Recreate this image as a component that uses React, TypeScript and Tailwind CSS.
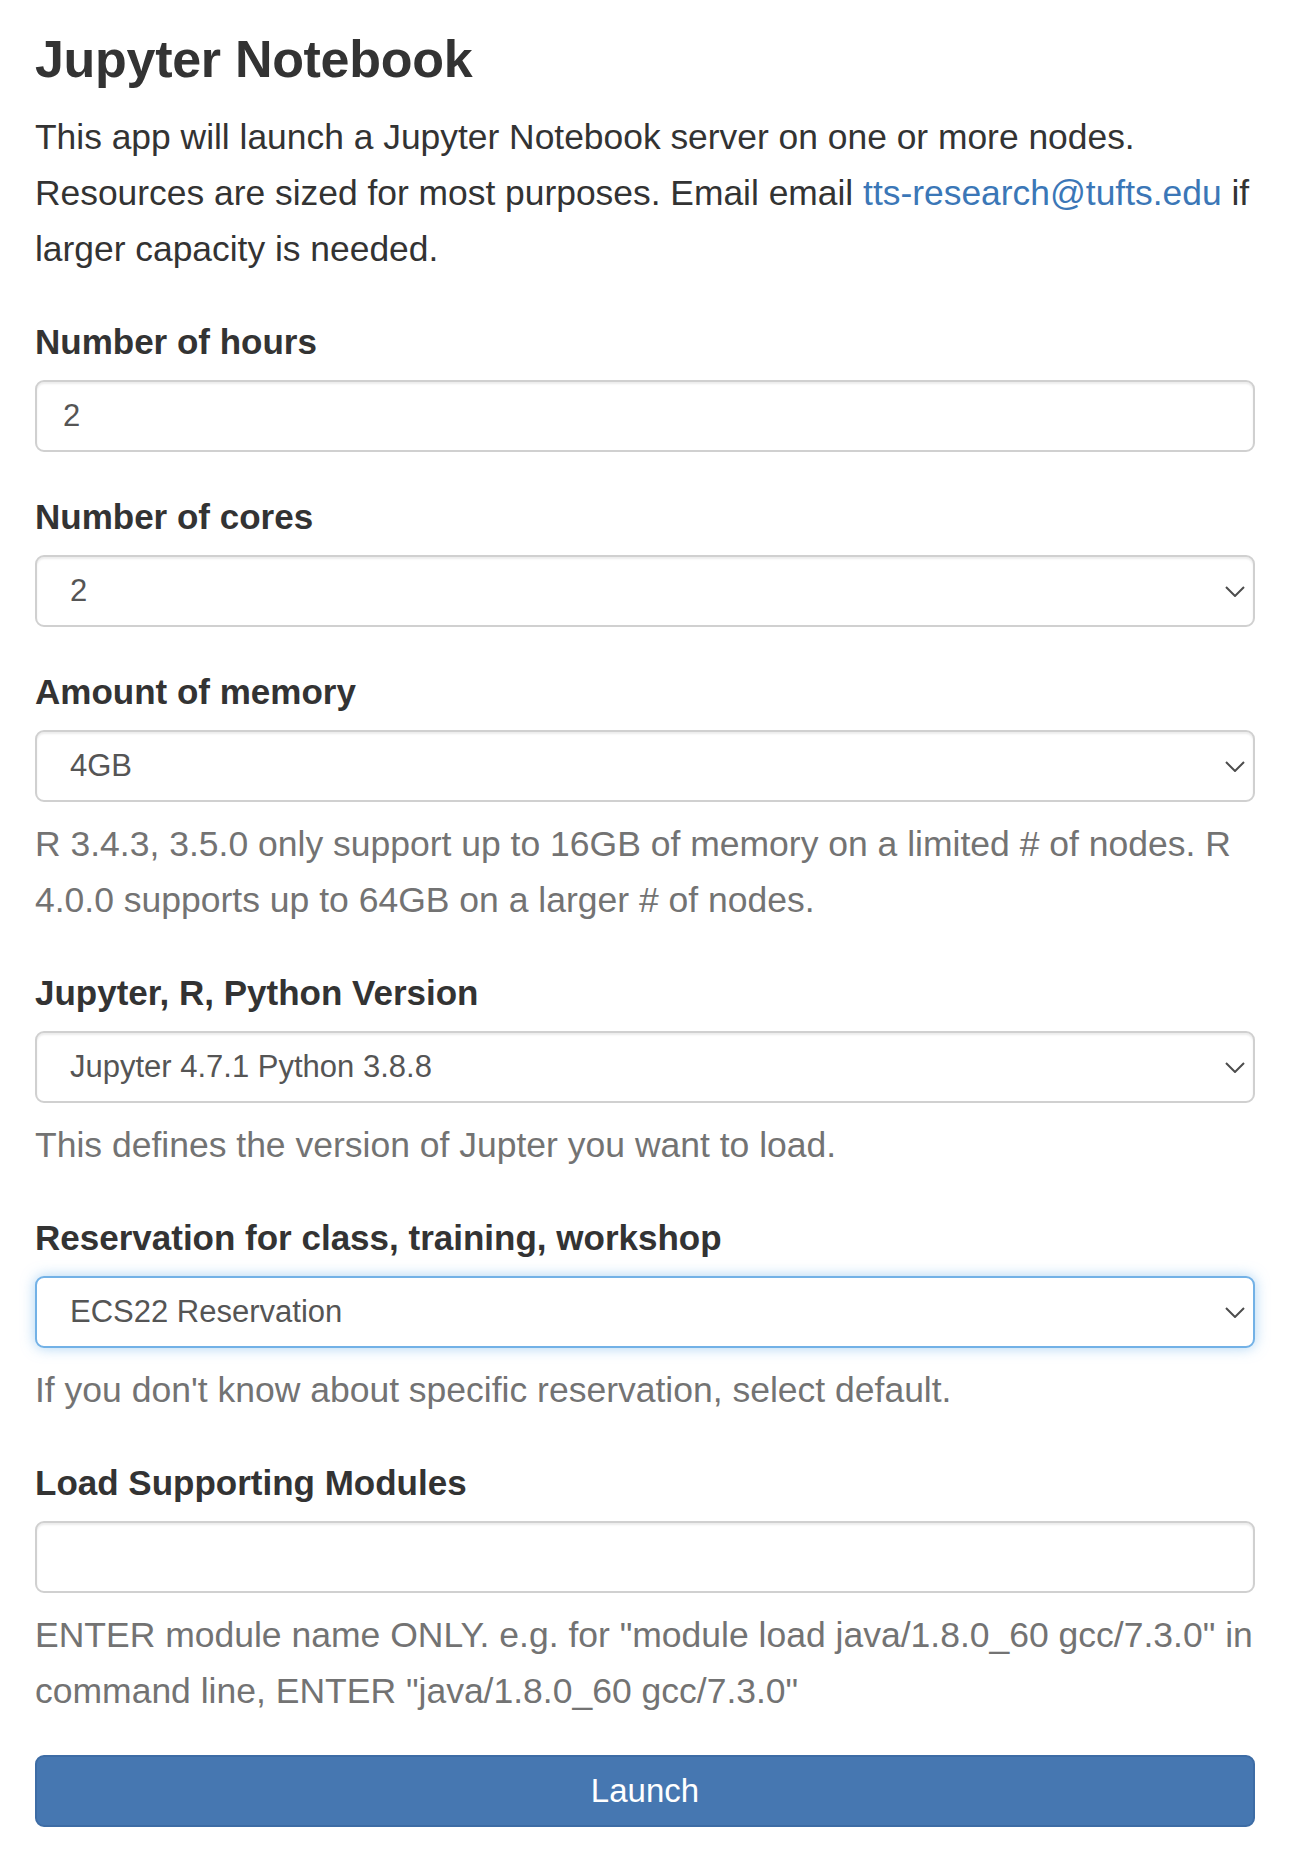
import React from "react";

const font = { fontFamily: '"Liberation Sans", Arial, Helvetica, sans-serif' };

const Chevron = () => (
  <svg width="20" height="11" viewBox="0 0 20 11" fill="none">
    <polyline points="1,1 10,10 19,1" stroke="#4d4d4d" strokeWidth="2" />
  </svg>
);

interface GroupProps {
  label: string;
  children: React.ReactNode;
  help?: React.ReactNode;
}

const FormGroup: React.FC<GroupProps> = ({ label, children, help }) => (
  <div className="flex flex-col mt-[40px]">
    <label className="text-[35px] leading-[50px] font-bold text-[#333] mb-[13px]">{label}</label>
    {children}
    {help && <p className="text-[35.5px] leading-[56px] text-[#737373] mt-[14px]">{help}</p>}
  </div>
);

const TextBox = ({ value }: { value: string }) => (
  <div className="h-[72px] w-full flex items-center pl-[26px] border-2 border-[#d0d0d0] rounded-[9px] bg-white shadow-[inset_0_2px_2px_rgba(0,0,0,0.08)] text-[31px] text-[#555]">
    {value}
  </div>
);

const SelectBox = ({ value, focused }: { value: string; focused?: boolean }) => (
  <div
    className={`h-[72px] w-full flex items-center justify-between pl-[33px] pr-[8px] border-2 rounded-[9px] bg-white text-[31px] text-[#555] ${
      focused
        ? "border-[#72b1e6] shadow-[0_0_14px_rgba(102,175,233,0.55)]"
        : "border-[#d0d0d0] shadow-[inset_0_2px_2px_rgba(0,0,0,0.08)]"
    }`}
  >
    <span>{value}</span>
    <Chevron />
  </div>
);

export default function App() {
  return (
    <div className="bg-white min-h-[1858px]" style={font}>
      <div className="w-[1220px] ml-[35px] pt-[31px] pb-[30px]">
        <h1 className="text-[52px] leading-[56px] font-bold text-[#333] tracking-[-0.3px]">Jupyter Notebook</h1>
        <p className="text-[35.4px] leading-[56px] text-[#333] mt-[22px]">
          This app will launch a Jupyter Notebook server on one or more nodes.
          <br />
          Resources are sized for most purposes. Email email{" "}
          <a className="text-[#3b77b7]">tts-research@tufts.edu</a> if
          <br />
          larger capacity is needed.
        </p>

        <FormGroup label="Number of hours">
          <TextBox value="2" />
        </FormGroup>

        <FormGroup label="Number of cores">
          <SelectBox value="2" />
        </FormGroup>

        <FormGroup
          label="Amount of memory"
          help={
            <>
              R 3.4.3, 3.5.0 only support up to 16GB of memory on a limited # of nodes. R
              <br />
              4.0.0 supports up to 64GB on a larger # of nodes.
            </>
          }
        >
          <SelectBox value="4GB" />
        </FormGroup>

        <FormGroup label="Jupyter, R, Python Version" help="This defines the version of Jupter you want to load.">
          <SelectBox value="Jupyter 4.7.1 Python 3.8.8" />
        </FormGroup>

        <FormGroup
          label="Reservation for class, training, workshop"
          help="If you don't know about specific reservation, select default."
        >
          <SelectBox value="ECS22 Reservation" focused />
        </FormGroup>

        <FormGroup
          label="Load Supporting Modules"
          help={
            <>
              ENTER module name ONLY. e.g. for "module load java/1.8.0_60 gcc/7.3.0" in
              <br />
              command line, ENTER "java/1.8.0_60 gcc/7.3.0"
            </>
          }
        >
          <TextBox value="" />
        </FormGroup>

        <button className="mt-[36px] w-full h-[72px] rounded-[9px] bg-[#4677b1] border-2 border-[#3d6ca5] text-white text-[33px] flex items-center justify-center">
          Launch
        </button>
      </div>
    </div>
  );
}
